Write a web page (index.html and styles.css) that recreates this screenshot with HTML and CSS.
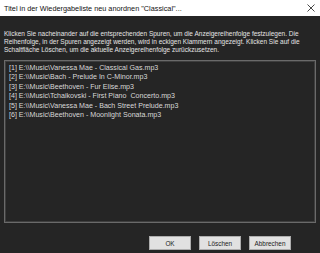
FILE: index.html
```html
<!DOCTYPE html>
<html lang="de">
  <head>
    <meta charset="UTF-8" />
    <meta name="viewport" content="width=device-width, initial-scale=1.0" />
    <title>Titel neu anordnen</title>
    <link rel="stylesheet" href="styles.css">
  </head>
  <body>
    <div class="dialog">
      <div class="title-bar">
        <span class="title">Titel in der Wiedergabeliste neu anordnen "Classical"...</span>
        <span class="close">
          <svg width="8" height="8" viewBox="0 0 8 8">
            <path d="M0.5 0.5 L7.5 7.5 M7.5 0.5 L0.5 7.5" stroke="#333" stroke-width="0.9" fill="none" />
          </svg>
        </span>
      </div>
      <div class="content">
        <p class="hint">Klicken Sie nacheinander auf die entsprechenden Spuren, um die Anzeigereihenfolge festzulegen. Die<br>
          Reihenfolge, in der Spuren angezeigt werden, wird in eckigen Klammern angezeigt. Klicken Sie auf die<br>
          Schaltfläche Löschen, um die aktuelle Anzeigereihenfolge zurückzusetzen.</p>
        <div class="track-list">
          <div class="track">[1] E:\\Music\Vanessa Mae - Classical Gas.mp3</div>
          <div class="track">[2] E:\\Music\Bach - Prelude In C-Minor.mp3</div>
          <div class="track">[3] E:\\Music\Beethoven - Fur Elise.mp3</div>
          <div class="track">[4] E:\\Music\Tchaikovski - First Piano&nbsp; Concerto.mp3</div>
          <div class="track">[5] E:\\Music\Vanessa Mae - Bach Street Prelude.mp3</div>
          <div class="track">[6] E:\\Music\Beethoven - Moonlight Sonata.mp3</div>
        </div>
        <div class="buttons">
          <button>OK</button>
          <button>Löschen</button>
          <button>Abbrechen</button>
        </div>
      </div>
    </div>
  </body>
</html>
```

FILE: styles.css
```css
html, body {
  margin: 0;
  padding: 0;
}
body {
  width: 320px;
  height: 253px;
  background-color: #252525;
  font-family: "Liberation Sans", Arial, sans-serif;
  overflow: hidden;
}
.dialog {
  display: flex;
  flex-direction: column;
  height: 253px;
}
.title-bar {
  height: 16px;
  background-color: #ffffff;
  display: flex;
  align-items: center;
  justify-content: space-between;
  padding: 0 5px 0 4px;
}
.title {
  font-size: 7.3px;
  color: #111;
}
.close {
  display: flex;
  align-items: center;
}
.content {
  flex: 1;
  display: flex;
  flex-direction: column;
  padding: 14px 4px 3px 4px;
}
.hint {
  margin: 0;
  font-size: 6.5px;
  line-height: 8px;
  color: #e6e6e6;
  white-space: nowrap;
}
.track-list {
  margin-top: 6px;
  height: 163px;
  box-sizing: border-box;
  border: 1px solid #6a6a6a;
  box-shadow: inset 0 0 0 1px #3e3e3e;
  padding: 3px 4px;
}
.track {
  font-size: 7.1px;
  line-height: 9.4px;
  color: #d8d8d8;
  white-space: nowrap;
}
.buttons {
  display: flex;
  gap: 8px;
  margin-top: 13px;
  padding-left: 145px;
}
.buttons button {
  width: 42px;
  height: 14px;
  padding: 0;
  border: 1px solid #adadad;
  background-color: #e1e1e1;
  font-family: "Liberation Sans", Arial, sans-serif;
  font-size: 6.4px;
  color: #222;
}
```
